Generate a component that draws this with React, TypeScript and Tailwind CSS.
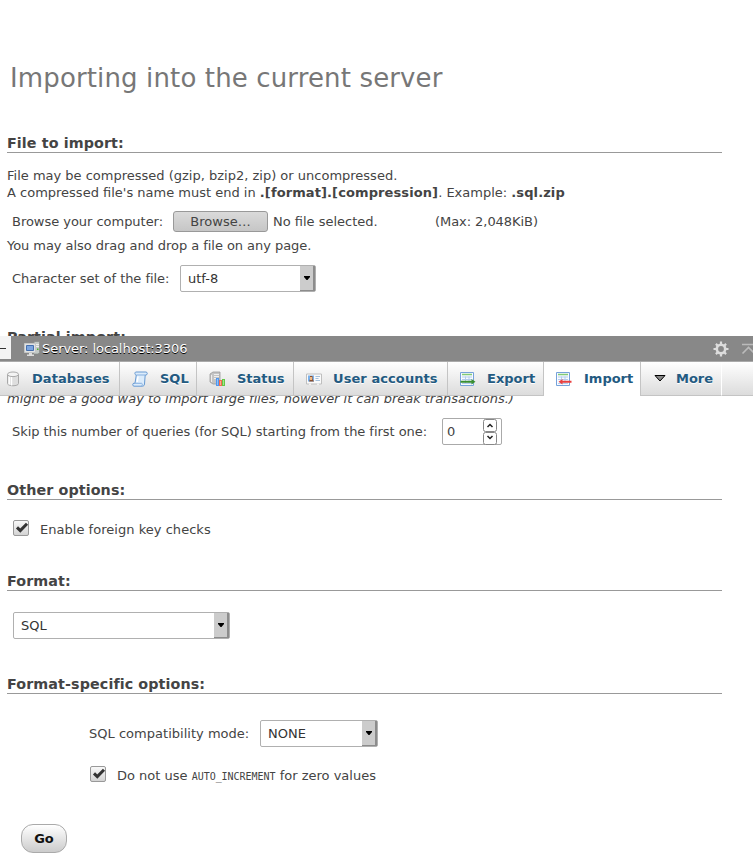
import type { ReactNode } from "react";

function Heading({ children, className }: { children: ReactNode; className: string }) {
  return (
    <h2
      className={`ml-[7px] w-[715px] border-b border-[#999] text-[14.3px] leading-[18px] font-bold tracking-[0.1px] text-[#444] ${className}`}
    >
      {children}
    </h2>
  );
}

function Select({ value, className }: { value: string; className: string }) {
  return (
    <div
      className={`flex h-[27px] items-center justify-between rounded-[2px] border border-[#b0b0b0] bg-white pl-[7px] text-[#333] ${className}`}
    >
      <span>{value}</span>
      <span className="flex h-[25px] w-[15px] items-center justify-center border-r-2 border-b border-[#8c8c8c] bg-[#ccc] pl-px">
        <svg width="6" height="4" viewBox="0 0 6 4">
          <path d="M0 0h6v1L3.500 4h-1L0 1z" fill="#000" />
        </svg>
      </span>
    </div>
  );
}

function Checkbox() {
  return (
    <svg width="16" height="16" viewBox="0 0 16 16" className="mb-[3px] shrink-0">
      <defs>
        <linearGradient id="box" x1="0" y1="0" x2="0" y2="1">
          <stop offset="0" stopColor="#fafafa" />
          <stop offset="1" stopColor="#d2d2d2" />
        </linearGradient>
      </defs>
      <rect x="0.5" y="0.5" width="15" height="15" rx="1.5" fill="url(#box)" stroke="#999" />
      <path d="M4 7.400l3.300 3.200L14 3.800" fill="none" stroke="#333" strokeWidth="3" />
    </svg>
  );
}

function ServerIcon() {
  return (
    <svg width="16" height="16" viewBox="0 0 16 16">
      <path d="M9.500 2l1.500-1.500h4.500v11L14 13H9.500z" fill="#c3c9c6" stroke="#858a88" strokeWidth=".7" />
      <path d="M11 3.500h4M11 5.500h4" stroke="#eee" />
      <path d="M13 7.500h1.500V9H13z" fill="#4eb52d" />
      <path d="M.5 2.500h11v9H.5z" fill="#e0e2e2" stroke="#c4c6c6" />
      <path d="M2.500 4.500h7v5h-7z" fill="#7ba5e0" stroke="#456fae" />
      <path d="M5 12h3v1.500h2V15H3v-1.500h2z" fill="#ddd" />
    </svg>
  );
}

function DatabaseIcon() {
  return (
    <svg width="16" height="16" viewBox="0 0 16 16">
      <path d="M3.500 3v9.500c0 3 11 3 11 0V3" fill="#dedede" stroke="#a8a8a8" />
      <path d="M5.200 5.500v8M7.500 6v8.500" stroke="#fff" strokeWidth="1.400" />
      <ellipse cx="9" cy="3.300" rx="5.500" ry="2.300" fill="#f4f4f4" stroke="#aaa" />
    </svg>
  );
}

function SqlIcon() {
  return (
    <svg width="16" height="16" viewBox="0 0 16 16">
      <path
        d="M4 1h10c1.700 0 1.700 3 0 3h-.8L12.500 13c-.2 1.500-1 2.200-2 2.200H2c-1.700 0-1.700-3 0-3h1L4.300 4C2.500 4 2.500 1 4 1z"
        fill="#dcecfb"
        stroke="#6699d2"
      />
      <path d="M4.500 4h8.500M3 12.300h6.500c1.200 0 1 2.300 0 2.700" fill="none" stroke="#85afe0" />
      <path d="M6 5.500L5.200 11" stroke="#fff" strokeWidth="1.500" />
    </svg>
  );
}

function StatusIcon() {
  return (
    <svg width="17" height="16" viewBox="0 0 17 16">
      <path d="M1 3l3-2h7v12H4l-3-2z" fill="#c4c4c4" stroke="#999" strokeWidth=".8" />
      <path d="M5 3.500h5M5 5.500h5M5 7.500h5M2.500 4v7" stroke="#eee" />
      <path d="M7 7h3v8H7z" fill="#5197ee" />
      <path d="M10 9h3v6h-3z" fill="#f26b50" />
      <path d="M13 8h3v7h-3z" fill="#63c746" />
      <path d="M8 8h1v6H8z" fill="#8fc0f8" />
      <path d="M11 10h1v4h-1z" fill="#fbac96" />
      <path d="M14 9h1v5h-1z" fill="#a4e78b" />
    </svg>
  );
}

function UsersIcon() {
  return (
    <svg width="16" height="16" viewBox="0 0 16 16">
      <path d="M.5 3h15v10H.5z" fill="#fafafa" stroke="#bfbfbf" />
      <path d="M2 4.500h6v6H2z" fill="#78b0eb" />
      <path d="M4 5h2.500v3L8 10.500H3L4 8z" fill="#8b5030" />
      <path d="M4 6h2v3H4z" fill="#f3b880" />
      <path d="M9.500 5.500H14M9.500 7.500h3M9.500 9.500H14" stroke="#a5c1dc" />
      <path d="M3 13.200h2M11 13.200h2" stroke="#fff" />
    </svg>
  );
}

function TableIcon({ direction }: { direction: "in" | "out" }) {
  return (
    <svg width="17" height="16" viewBox="0 0 17 16">
      <path d="M1.500 1.500h13v13h-13z" fill="#f8fbff" stroke="#76a2da" />
      <path d="M3 3.500h10" stroke="#83ca75" strokeWidth="1.500" />
      <path d="M3 6h10M3 8.500h10M3 12.500h10M6.500 5.500v7M10 5.500v7" stroke="#b4cdec" />
      {direction === "out" ? (
        <path d="M1.500 9.700h11V8l4 2.700-4 2.700v-1.700h-11z" fill="#3a8f31" />
      ) : (
        <path d="M3.500 10.700l4-2.700v1.700h9v2h-9v1.700z" fill="#e94040" />
      )}
    </svg>
  );
}

function GearIcon() {
  return (
    <svg width="16" height="16" viewBox="0 0 16 16">
      <g stroke="#ddd" strokeWidth="2.200">
        <path d="M8 .5v3M8 12.500v3M.5 8h3M12.500 8h3" />
        <path d="M2.900 2.900L5 5M11 11l2.100 2.100M13.100 2.900L11 5M5 11l-2.100 2.100" />
      </g>
      <circle cx="8" cy="8" r="4.200" fill="none" stroke="#ddd" strokeWidth="2.600" />
    </svg>
  );
}

function Tab({
  icon,
  label,
  className,
  gap = "gap-[12px]",
}: {
  icon: ReactNode;
  label: string;
  className: string;
  gap?: string;
}) {
  return (
    <a
      className={`flex h-[34px] shrink-0 items-center overflow-hidden border-r border-[#c4c4c4] font-bold text-[#235a81] ${gap} ${className}`}
    >
      <span className="shrink-0">{icon}</span>
      <span className="[text-shadow:0_1px_0_#fff]">{label}</span>
    </a>
  );
}

const shade = "border-b bg-linear-to-b from-white to-[#dcdcdc]";

function TopBar() {
  return (
    <header className="absolute inset-x-0 top-[336px] overflow-hidden">
      <div className="flex h-[26px] items-center border-b border-[#aaa] bg-[#888] text-white">
        <span className="flex h-[23px] w-[11px] items-center self-start bg-[#f4f4f4] pt-[2px]">
          <span className="h-px w-[6px] bg-[#333]" />
        </span>
        <span className="ml-[13px]">
          <ServerIcon />
        </span>
        <span className="ml-[2px] text-[13px] tracking-[-0.06px] [text-shadow:0_1px_0_#000]">
          Server: localhost:3306
        </span>
        <span className="ml-auto">
          <GearIcon />
        </span>
        <svg width="12" height="12" viewBox="0 0 12 12" className="ml-[12px]">
          <path d="M1 1.500h15M1.500 10.500l6-6 5 5" fill="none" stroke="#bbb" strokeWidth="1.600" />
        </svg>
      </div>
      <nav className="flex h-[34px]">
        <Tab icon={<DatabaseIcon />} label="Databases" className={`w-[120px] pl-[4px] tracking-[0.08px] ${shade}`} />
        <Tab icon={<SqlIcon />} label="SQL" className={`w-[77px] pl-[12px] ${shade}`} />
        <Tab icon={<StatusIcon />} label="Status" className={`w-[97px] pl-[12px] ${shade}`} gap="gap-[11px]" />
        <Tab
          icon={<UsersIcon />}
          label="User accounts"
          className={`w-[154px] pl-[12px] tracking-[0.08px] ${shade}`}
          gap="gap-[11px]"
        />
        <Tab icon={<TableIcon direction="out" />} label="Export" className={`w-[96px] pl-[11px] ${shade}`} gap="gap-[11px]" />
        <Tab icon={<TableIcon direction="in" />} label="Import" className="w-[97px] bg-white pb-px pl-[11px]" />
        <Tab
          icon={
            <svg width="12" height="7" viewBox="0 0 12 7">
              <path d="M1 .5h10L6 6z" fill="#888" stroke="#000" />
            </svg>
          }
          label="More"
          className={`w-[81px] border-r-white pl-[13px] ${shade}`}
          gap="gap-[10px]"
        />
        <span className={`h-[34px] grow border-[#c4c4c4] ${shade}`} />
      </nav>
    </header>
  );
}

export default function App() {
  return (
    <div className="relative flex h-[867px] w-[753px] flex-col overflow-hidden bg-white font-['DejaVu_Sans',sans-serif] text-[13px] leading-[17px] whitespace-nowrap text-[#444]">
      <h1 className="mt-[63px] ml-[10px] h-[31px] text-[26px] leading-[31px] tracking-[0.135px] text-[#777]">
        Importing into the current server
      </h1>

      <Heading className="mt-[40px]">File to import:</Heading>
      <p className="mt-[14px] ml-[7px]">
        File may be compressed (gzip, bzip2, zip) or uncompressed.
        <br />
        A compressed file's name must end in <b className="tracking-[0.1px]">.[format].[compression]</b>. Example:{" "}
        <b className="tracking-[0.1px]">.sql.zip</b>
      </p>
      <div className="mt-[10px] ml-[12px] flex h-[21px] items-center">
        <span className="w-[161px] tracking-[-0.03px]">Browse your computer:</span>
        <button className="h-[21px] w-[95px] rounded-[3px] border border-[#999] bg-linear-to-b from-[#dadada] to-[#c6c6c6]">
          Browse…
        </button>
        <span className="ml-[5px] w-[162px]">No file selected.</span>
        <span className="tracking-[-0.06px]">(Max: 2,048KiB)</span>
      </div>
      <p className="mt-[5px] ml-[7px] tracking-[-0.05px]">You may also drag and drop a file on any page.</p>
      <div className="mt-[11px] ml-[12px] flex items-center">
        <span className="w-[168px] tracking-[-0.05px]">Character set of the file:</span>
        <Select value="utf-8" className="w-[136px]" />
      </div>

      <Heading className="mt-[36px]">Partial import:</Heading>
      <p className="mt-[43px] ml-[7px] tracking-[-0.025px] italic">
        might be a good way to import large files, however it can break transactions.)
      </p>
      <div className="mt-[11px] ml-[12px] flex items-center">
        <span className="w-[430px] tracking-[-0.045px]">
          Skip this number of queries (for SQL) starting from the first one:
        </span>
        <div className="flex h-[27px] w-[60px] items-center justify-between rounded-[2px] border border-[#aaa] pr-[4px] pl-[4px]">
          <span>0</span>
          <svg width="14" height="26" viewBox="0 0 14 26">
            <rect x=".5" y=".5" width="13" height="12" rx="2" fill="#fff" stroke="#888" />
            <rect x=".5" y="13.500" width="13" height="12" rx="2" fill="#fff" stroke="#888" />
            <path d="M4.500 8L7 5.500 9.500 8M4.500 17L7 19.500 9.500 17" fill="none" stroke="#222" strokeWidth="1.500" />
          </svg>
        </div>
      </div>

      <Heading className="mt-[36px]">Other options:</Heading>
      <div className="mt-[20px] ml-[13px] flex h-[19px] items-center gap-[11px]">
        <Checkbox />
        <span className="tracking-[0.03px]">Enable foreign key checks</span>
      </div>

      <Heading className="mt-[33px]">Format:</Heading>
      <Select value="SQL" className="mt-[21px] ml-[13px] w-[217px]" />

      <Heading className="mt-[36px]">Format-specific options:</Heading>
      <div className="mt-[26px] ml-[89px] flex items-center">
        <span className="w-[171px] tracking-[0.02px]">SQL compatibility mode:</span>
        <Select value="NONE" className="w-[118px]" />
      </div>
      <div className="mt-[19px] ml-[90px] flex h-[19px] items-center gap-[11px]">
        <Checkbox />
        <span>
          Do not use{" "}
          <code className="font-['DejaVu_Sans_Mono',monospace] text-[10px] tracking-[-0.03px]">AUTO_INCREMENT</code> for
          zero values
        </span>
      </div>

      <button className="mt-[39px] ml-[21px] h-[29px] w-[46px] rounded-[12px] border border-[#aaa] bg-linear-to-b from-white to-[#ccc] font-bold text-[#111]">
        Go
      </button>
      <TopBar />
    </div>
  );
}
